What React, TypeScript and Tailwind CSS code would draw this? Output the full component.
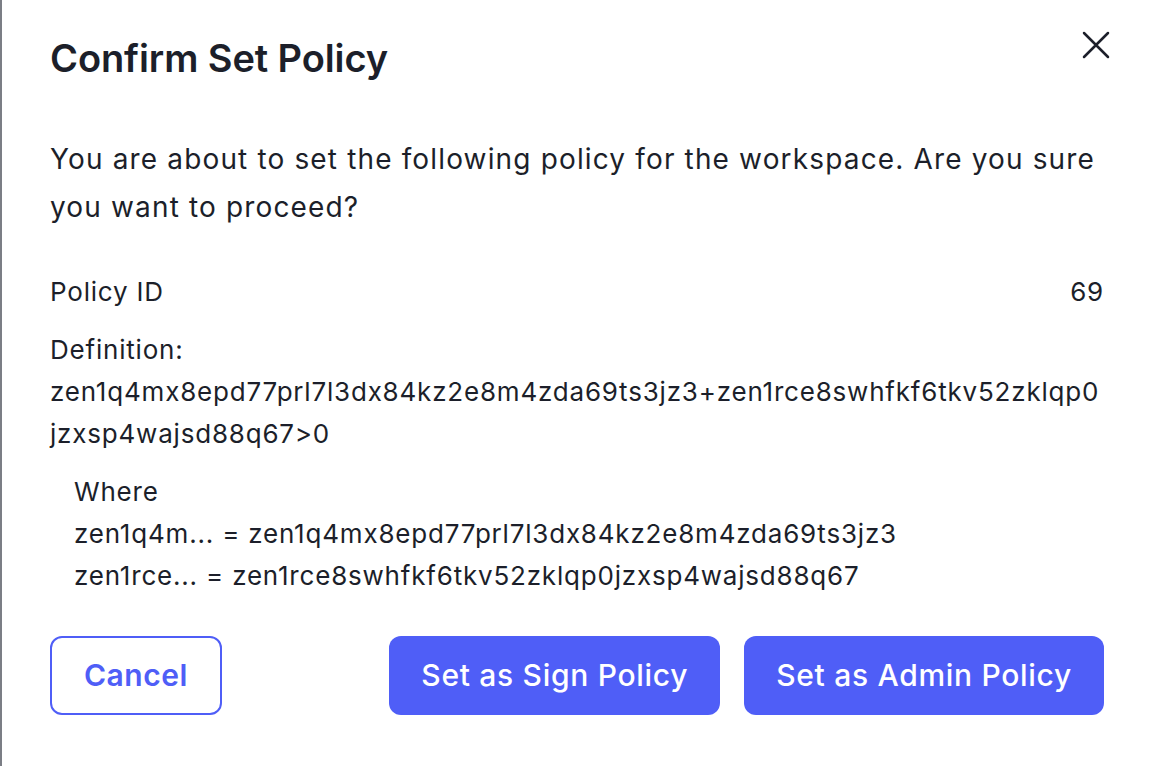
const definition =
  "zen1q4mx8epd77prl7l3dx84kz2e8m4zda69ts3jz3+zen1rce8swhfkf6tkv52zklqp0jzxsp4wajsd88q67>0";

const aliases = [
  { short: "zen1q4m...", full: "zen1q4mx8epd77prl7l3dx84kz2e8m4zda69ts3jz3" },
  { short: "zen1rce...", full: "zen1rce8swhfkf6tkv52zklqp0jzxsp4wajsd88q67" },
];

export default function App() {
  return (
    <div className="flex h-screen w-full bg-white font-['Inter',sans-serif] text-[#1c1f2a]">
      <div className="w-[2px] bg-[#7b7e85]" />
      <div className="flex flex-1 flex-col rounded-tl-[6px] pl-[48px] pr-[46px] pt-[30px]">
        <header className="flex items-start justify-between">
          <h1 className="text-[38px] font-semibold leading-[56px] tracking-[-0.1px]">
            Confirm Set Policy
          </h1>
          <button type="button" className="-mr-[8px] mt-[-1px] p-[2px] text-[#1c1f2a]">
            <svg width="28" height="28" viewBox="0 0 28 28" fill="none">
              <path
                d="M2 2L26 26M26 2L2 26"
                stroke="currentColor"
                strokeWidth="2.5"
                strokeLinecap="round"
              />
            </svg>
          </button>
        </header>

        <p className="mt-[49px] text-[28px] leading-[48px] tracking-[1.15px]">
          You are about to set the following policy for the workspace. Are you sure you want to
          proceed?
        </p>

        <div className="mt-[40px] flex items-center justify-between text-[26px] leading-[42px] tracking-[0.8px]">
          <span>Policy ID</span>
          <span>69</span>
        </div>

        <div className="mt-[16px] text-[26px] leading-[42px] tracking-[0.8px]">
          <div>Definition:</div>
          <div className="break-all">{definition}</div>
        </div>

        <div className="mt-[16px] pl-[24px] text-[26px] leading-[42px] tracking-[0.8px]">
          <div>Where</div>
          {aliases.map((a) => (
            <div key={a.short}>
              {a.short} = {a.full}
            </div>
          ))}
        </div>

        <footer className="mt-[39px] flex items-center gap-[24px]">
          <button
            type="button"
            className="h-[79px] rounded-[12px] border-2 border-[#4f5ef7] px-[32px] text-[30px] font-semibold tracking-[0.5px] text-[#4f5ef7]"
          >
            Cancel
          </button>
          <div className="ml-auto flex gap-[24px]">
            <button
              type="button"
              className="h-[79px] rounded-[12px] bg-[#4f5ef7] px-[32px] text-[30px] font-medium tracking-[0.7px] text-white"
            >
              Set as Sign Policy
            </button>
            <button
              type="button"
              className="h-[79px] rounded-[12px] bg-[#4f5ef7] px-[32px] text-[30px] font-medium tracking-[0.7px] text-white"
            >
              Set as Admin Policy
            </button>
          </div>
        </footer>
      </div>
    </div>
  );
}
